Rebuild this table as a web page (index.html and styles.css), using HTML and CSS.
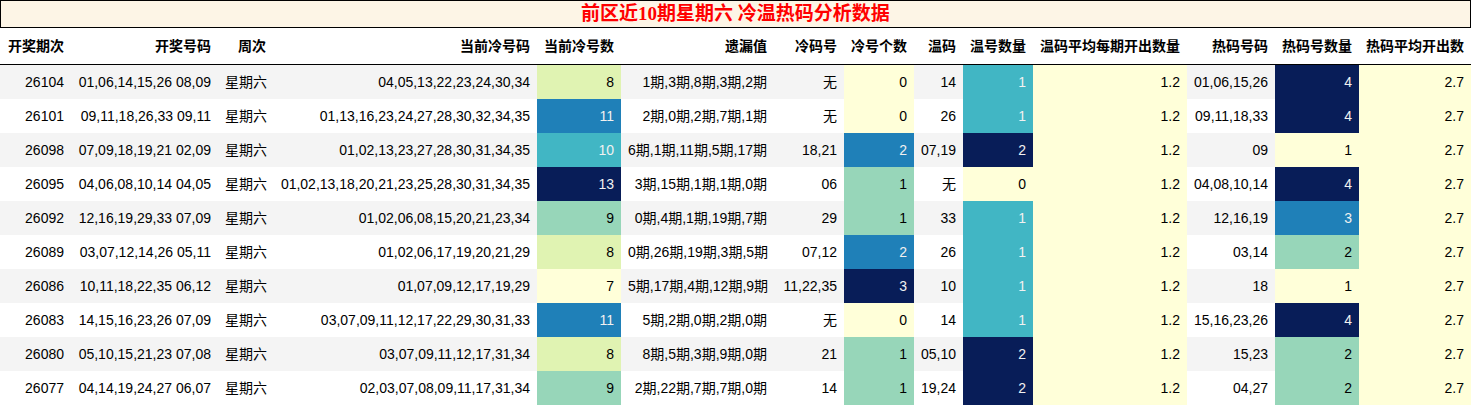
FILE: index.html
```html
<!DOCTYPE html>
<html lang="zh">
<head>
<meta charset="utf-8">
<title>冷温热码分析</title>
<link rel="stylesheet" href="styles.css">
</head>
<body>
<table class="data">
<caption class="title">前区近10期星期六 冷温热码分析数据</caption>
<colgroup>
<col class="c1"><col class="c2"><col class="c3"><col class="c4"><col class="c5"><col class="c6"><col class="c7"><col class="c8"><col class="c9"><col class="c10"><col class="c11"><col class="c12"><col class="c13"><col class="c14">
</colgroup>
<thead>
<tr><th>开奖期次</th><th>开奖号码</th><th>周次</th><th>当前冷号码</th><th>当前冷号数</th><th>遗漏值</th><th>冷码号</th><th>冷号个数</th><th>温码</th><th>温号数量</th><th>温码平均每期开出数量</th><th>热码号码</th><th>热码号数量</th><th>热码平均开出数</th></tr>
</thead>
<tbody>
<tr><td>26104</td><td>01,06,14,15,26 08,09</td><td>星期六</td><td>04,05,13,22,23,24,30,34</td><td class="g1">8</td><td>1期,3期,8期,3期,2期</td><td>无</td><td class="g0">0</td><td>14</td><td class="g3">1</td><td class="g0">1.2</td><td>01,06,15,26</td><td class="g5">4</td><td class="g0">2.7</td></tr>
<tr><td>26101</td><td>09,11,18,26,33 09,11</td><td>星期六</td><td>01,13,16,23,24,27,28,30,32,34,35</td><td class="g4">11</td><td>2期,0期,2期,7期,1期</td><td>无</td><td class="g0">0</td><td>26</td><td class="g3">1</td><td class="g0">1.2</td><td>09,11,18,33</td><td class="g5">4</td><td class="g0">2.7</td></tr>
<tr><td>26098</td><td>07,09,18,19,21 02,09</td><td>星期六</td><td>01,02,13,23,27,28,30,31,34,35</td><td class="g3">10</td><td>6期,1期,11期,5期,17期</td><td>18,21</td><td class="g4">2</td><td>07,19</td><td class="g5">2</td><td class="g0">1.2</td><td>09</td><td class="g0">1</td><td class="g0">2.7</td></tr>
<tr><td>26095</td><td>04,06,08,10,14 04,05</td><td>星期六</td><td>01,02,13,18,20,21,23,25,28,30,31,34,35</td><td class="g5">13</td><td>3期,15期,1期,1期,0期</td><td>06</td><td class="g2">1</td><td>无</td><td class="g0">0</td><td class="g0">1.2</td><td>04,08,10,14</td><td class="g5">4</td><td class="g0">2.7</td></tr>
<tr><td>26092</td><td>12,16,19,29,33 07,09</td><td>星期六</td><td>01,02,06,08,15,20,21,23,34</td><td class="g2">9</td><td>0期,4期,1期,19期,7期</td><td>29</td><td class="g2">1</td><td>33</td><td class="g3">1</td><td class="g0">1.2</td><td>12,16,19</td><td class="g4">3</td><td class="g0">2.7</td></tr>
<tr><td>26089</td><td>03,07,12,14,26 05,11</td><td>星期六</td><td>01,02,06,17,19,20,21,29</td><td class="g1">8</td><td>0期,26期,19期,3期,5期</td><td>07,12</td><td class="g4">2</td><td>26</td><td class="g3">1</td><td class="g0">1.2</td><td>03,14</td><td class="g2">2</td><td class="g0">2.7</td></tr>
<tr><td>26086</td><td>10,11,18,22,35 06,12</td><td>星期六</td><td>01,07,09,12,17,19,29</td><td class="g0">7</td><td>5期,17期,4期,12期,9期</td><td>11,22,35</td><td class="g5">3</td><td>10</td><td class="g3">1</td><td class="g0">1.2</td><td>18</td><td class="g0">1</td><td class="g0">2.7</td></tr>
<tr><td>26083</td><td>14,15,16,23,26 07,09</td><td>星期六</td><td>03,07,09,11,12,17,22,29,30,31,33</td><td class="g4">11</td><td>5期,2期,0期,2期,0期</td><td>无</td><td class="g0">0</td><td>14</td><td class="g3">1</td><td class="g0">1.2</td><td>15,16,23,26</td><td class="g5">4</td><td class="g0">2.7</td></tr>
<tr><td>26080</td><td>05,10,15,21,23 07,08</td><td>星期六</td><td>03,07,09,11,12,17,31,34</td><td class="g1">8</td><td>8期,5期,3期,9期,0期</td><td>21</td><td class="g2">1</td><td>05,10</td><td class="g5">2</td><td class="g0">1.2</td><td>15,23</td><td class="g2">2</td><td class="g0">2.7</td></tr>
<tr><td>26077</td><td>04,14,19,24,27 06,07</td><td>星期六</td><td>02,03,07,08,09,11,17,31,34</td><td class="g2">9</td><td>2期,22期,7期,7期,0期</td><td>14</td><td class="g2">1</td><td>19,24</td><td class="g5">2</td><td class="g0">1.2</td><td>04,27</td><td class="g2">2</td><td class="g0">2.7</td></tr>
</tbody>
</table>
</body>
</html>
```

FILE: styles.css
```css
html, body {
  margin: 0;
  padding: 0;
  background: #ffffff;
}

.data {
  border-collapse: collapse;
  border-spacing: 0;
  table-layout: fixed;
  width: 1471px;
  font-family: "Liberation Sans", "Noto Sans CJK SC", sans-serif;
  font-size: 14px;
  color: #000000;
}

.title {
  caption-side: top;
  box-sizing: border-box;
  height: 28px;
  line-height: 26px;
  border: 1px solid #000000;
  background: #fdf5e6;
  color: #ff0000;
  font-family: "Liberation Serif", "Noto Sans CJK SC", serif;
  font-weight: bold;
  font-size: 19px;
  text-align: center;
}

.c1 { width: 71px; }
.c2 { width: 147px; }
.c3 { width: 55px; }
.c4 { width: 264px; }
.c5 { width: 84px; }
.c6 { width: 153px; }
.c7 { width: 70px; }
.c8 { width: 70px; }
.c9 { width: 49px; }
.c10 { width: 70px; }
.c11 { width: 154px; }
.c12 { width: 88px; }
.c13 { width: 84px; }
.c14 { width: 112px; }

.data th {
  font-weight: bold;
  text-align: right;
  white-space: nowrap;
  padding: 9px 7px 9px 7px;
  line-height: 18px;
  border-bottom: 1px solid #000000;
  background: #ffffff;
}

.data td {
  text-align: right;
  white-space: nowrap;
  padding: 9px 7px;
  line-height: 16px;
}

.data tbody tr:nth-child(odd) td {
  background: #f4f4f4;
}

.data tbody tr:nth-child(even) td {
  background: #ffffff;
}

.data tbody tr td.g0 { background: #ffffd9; color: #000000; }
.data tbody tr td.g1 { background: #e0f3b2; color: #000000; }
.data tbody tr td.g2 { background: #97d6b9; color: #000000; }
.data tbody tr td.g3 { background: #41b6c4; color: #f1f1f1; }
.data tbody tr td.g4 { background: #1f80b8; color: #f1f1f1; }
.data tbody tr td.g5 { background: #081d58; color: #f1f1f1; }
```
